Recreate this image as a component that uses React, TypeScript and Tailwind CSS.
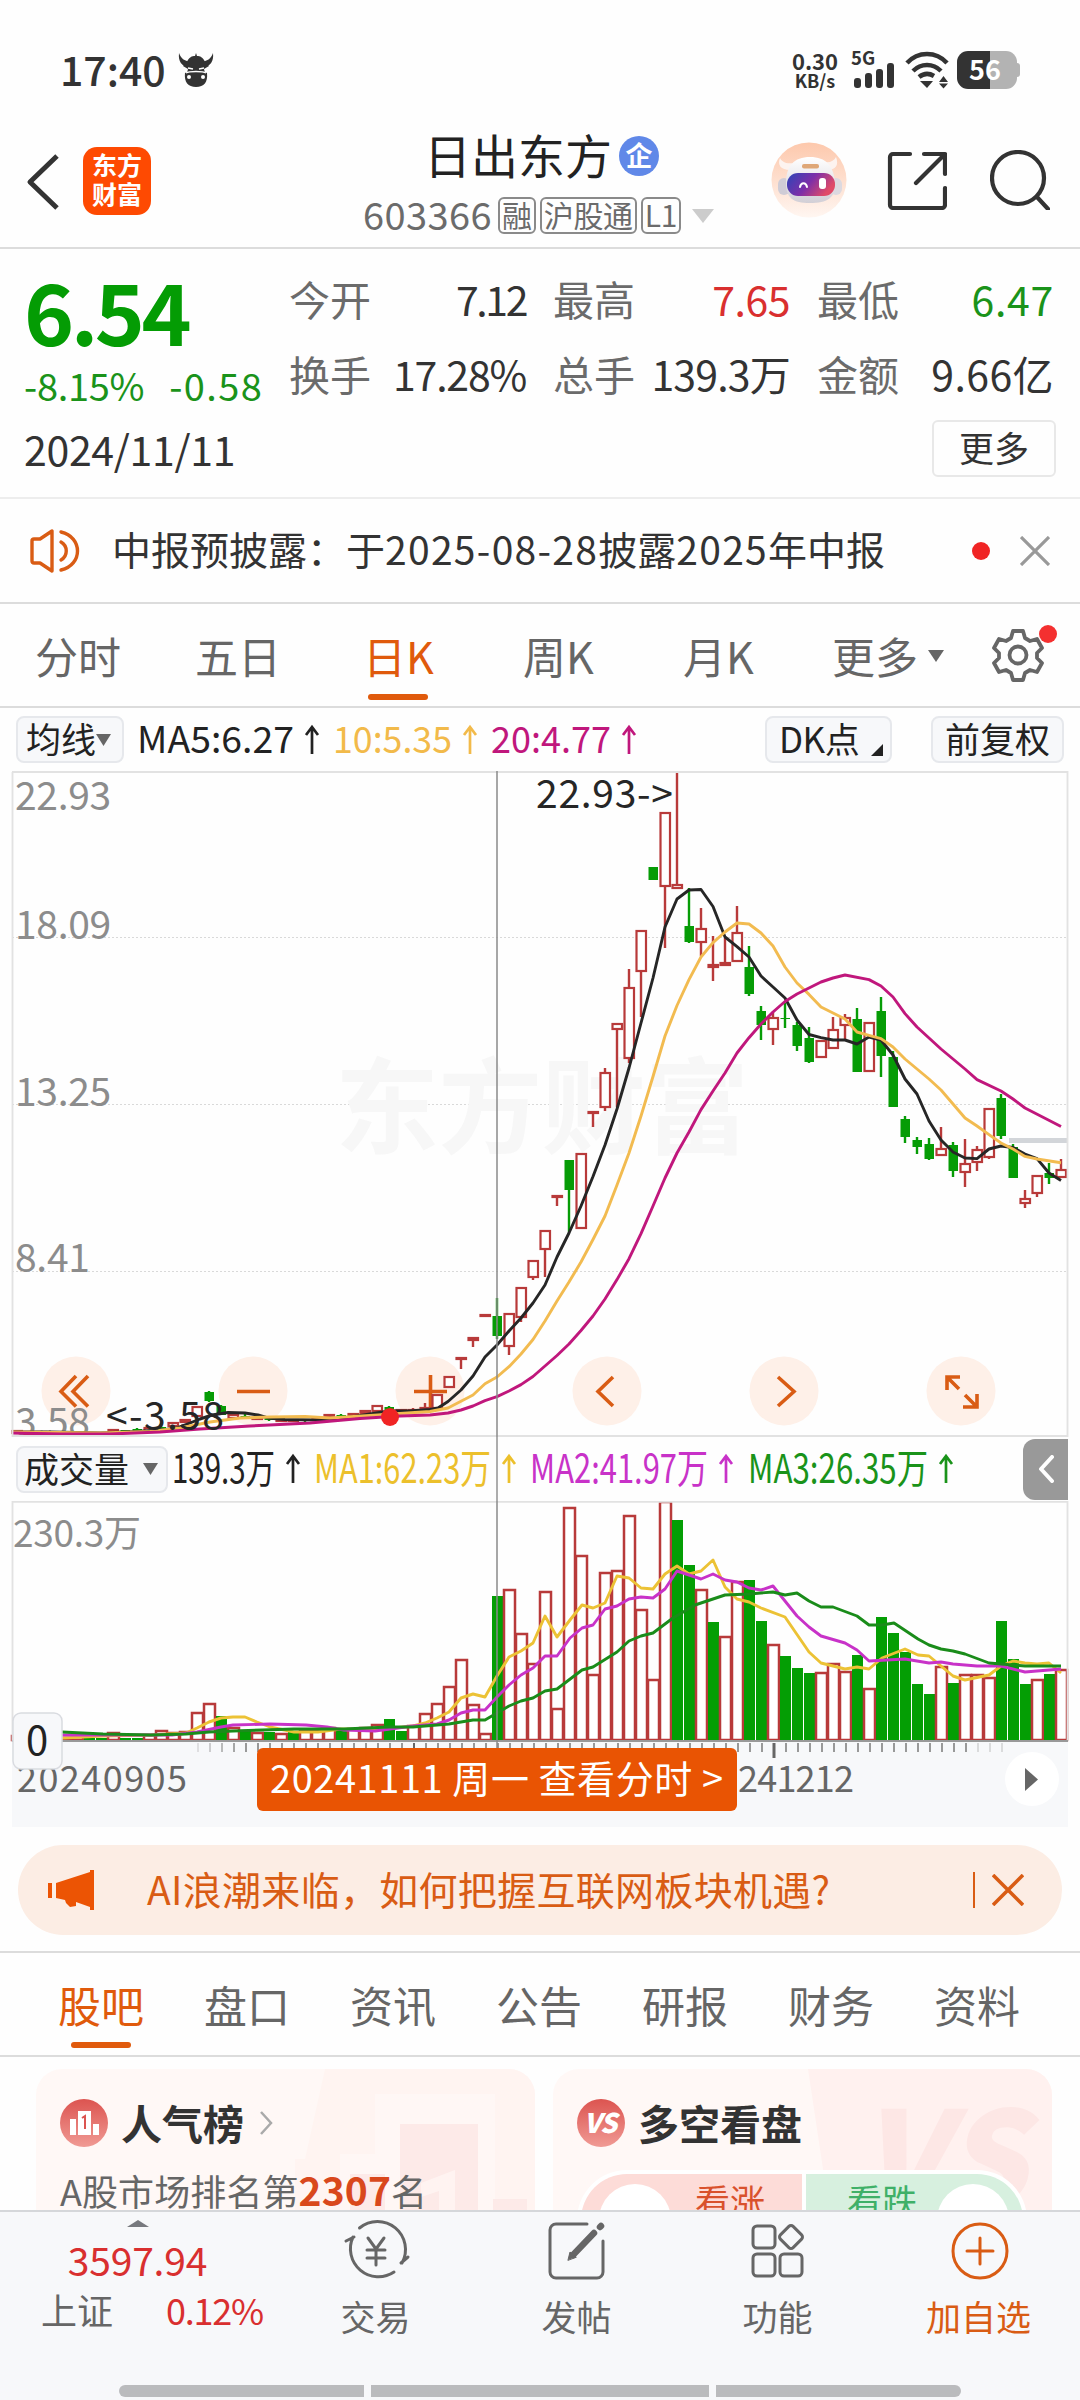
import type { ReactNode } from "react";
import clsx from "clsx";

type Candle = {
  i: number;
  up: boolean;
  high: number;
  top: number;
  bottom: number;
  low: number;
};

type Point = [number, number];

const STEP = 12;
const CROSSHAIR_X = 497;
const VOLUME_BASE = 1740;

// index (0 = crosshair day), direction, high, body top, body bottom, low
const CANDLE_ROWS: [number, "u" | "d", number, number, number, number][] = [
  [-40, "u", 1431, 1431, 1433, 1433],
  [-39, "u", 1432, 1432, 1434, 1434],
  [-38, "u", 1432, 1432, 1434, 1434],
  [-37, "d", 1433, 1433, 1435, 1435],
  [-36, "u", 1433, 1433, 1435, 1435],
  [-35, "u", 1434, 1434, 1436, 1436],
  [-34, "d", 1434, 1434, 1436, 1436],
  [-33, "d", 1435, 1436, 1437, 1438],
  [-32, "u", 1430, 1430, 1432, 1432],
  [-31, "d", 1430, 1430, 1431, 1432],
  [-30, "d", 1428, 1429, 1431, 1431],
  [-29, "u", 1428, 1428, 1431, 1431],
  [-28, "d", 1424, 1427, 1429, 1429],
  [-27, "u", 1423, 1423, 1426, 1426],
  [-26, "u", 1419, 1420, 1422, 1423],
  [-25, "u", 1406, 1407, 1416, 1417],
  [-24, "d", 1391, 1392, 1401, 1402],
  [-23, "d", 1405, 1406, 1415, 1415],
  [-22, "u", 1413, 1415, 1418, 1419],
  [-21, "d", 1414, 1416, 1418, 1418],
  [-20, "u", 1417, 1418, 1419, 1420],
  [-19, "d", 1418, 1419, 1420, 1421],
  [-18, "u", 1419, 1420, 1421, 1422],
  [-17, "u", 1419, 1420, 1421, 1422],
  [-16, "d", 1419, 1420, 1421, 1422],
  [-15, "u", 1418, 1419, 1420, 1420],
  [-14, "u", 1415, 1415, 1417, 1417],
  [-13, "d", 1414, 1415, 1417, 1417],
  [-12, "u", 1413, 1414, 1416, 1416],
  [-11, "u", 1410, 1411, 1413, 1414],
  [-10, "u", 1405, 1406, 1411, 1411],
  [-9, "d", 1406, 1407, 1410, 1411],
  [-8, "u", 1409, 1410, 1411, 1412],
  [-7, "u", 1408, 1410, 1411, 1411],
  [-6, "u", 1403, 1408, 1409, 1410],
  [-5, "u", 1395, 1395, 1408, 1408],
  [-4, "u", 1377, 1377, 1387, 1387],
  [-3, "u", 1358, 1358, 1359, 1369],
  [-2, "u", 1337, 1338, 1340, 1347],
  [-1, "u", 1315, 1315, 1316, 1316],
  [0, "d", 1298, 1316, 1336, 1339],
  [1, "u", 1313, 1314, 1346, 1355],
  [2, "u", 1288, 1288, 1317, 1322],
  [3, "u", 1261, 1261, 1277, 1280],
  [4, "u", 1230, 1231, 1249, 1277],
  [5, "u", 1196, 1196, 1197, 1206],
  [6, "d", 1160, 1160, 1190, 1232],
  [7, "u", 1154, 1154, 1228, 1228],
  [8, "u", 1112, 1112, 1113, 1127],
  [9, "u", 1068, 1073, 1107, 1111],
  [10, "u", 1023, 1024, 1029, 1107],
  [11, "u", 969, 988, 1058, 1063],
  [12, "u", 930, 931, 971, 1017],
  [13, "d", 867, 867, 880, 880],
  [14, "u", 812, 813, 886, 948],
  [15, "u", 771, 885, 888, 888],
  [16, "d", 888, 926, 942, 943],
  [17, "u", 908, 929, 942, 956],
  [18, "u", 936, 965, 967, 981],
  [19, "u", 938, 963, 965, 965],
  [20, "u", 906, 933, 961, 961],
  [21, "d", 946, 967, 994, 996],
  [22, "d", 1006, 1011, 1025, 1040],
  [23, "u", 1012, 1018, 1029, 1045],
  [24, "d", 1003, 1018, 1019, 1028],
  [25, "d", 1022, 1025, 1046, 1051],
  [26, "d", 1027, 1038, 1062, 1063],
  [27, "u", 1041, 1041, 1057, 1057],
  [28, "u", 1017, 1030, 1048, 1048],
  [29, "u", 1014, 1018, 1025, 1040],
  [30, "d", 1008, 1019, 1072, 1072],
  [31, "u", 1023, 1023, 1071, 1071],
  [32, "d", 997, 1011, 1056, 1077],
  [33, "d", 1051, 1057, 1107, 1107],
  [34, "d", 1116, 1119, 1137, 1143],
  [35, "d", 1137, 1140, 1147, 1154],
  [36, "d", 1138, 1144, 1159, 1160],
  [37, "u", 1127, 1149, 1155, 1155],
  [38, "d", 1142, 1145, 1171, 1177],
  [39, "u", 1139, 1164, 1172, 1187],
  [40, "u", 1146, 1150, 1162, 1171],
  [41, "u", 1109, 1109, 1157, 1159],
  [42, "d", 1094, 1098, 1136, 1139],
  [43, "d", 1144, 1147, 1178, 1178],
  [44, "u", 1190, 1199, 1203, 1208],
  [45, "u", 1175, 1176, 1193, 1197],
  [46, "d", 1163, 1173, 1178, 1184],
  [47, "u", 1159, 1170, 1177, 1177],
];

const CANDLES: Candle[] = CANDLE_ROWS.map(([i, dir, high, top, bottom, low]) => ({
  i,
  up: dir === "u",
  high,
  top,
  bottom,
  low,
}));

// bar tops from left to right, starting at index -40
const VOLUMES: [number, "u" | "d"][] = [
  [1736, "u"], [1737, "d"], [1738, "u"], [1738, "d"], [1738, "u"], [1737, "u"], [1738, "d"],
  [1738, "d"], [1733, "u"], [1738, "d"], [1738, "d"], [1735, "u"], [1731, "u"], [1733, "u"],
  [1732, "u"], [1713, "u"], [1704, "u"], [1716, "d"], [1728, "u"], [1730, "d"], [1733, "u"],
  [1732, "d"], [1734, "u"], [1731, "d"], [1730, "u"], [1730, "u"], [1728, "u"], [1730, "d"],
  [1729, "u"], [1728, "u"], [1725, "u"], [1719, "d"], [1731, "d"], [1726, "u"], [1714, "u"],
  [1704, "u"], [1687, "u"], [1660, "u"], [1705, "u"], [1734, "u"], [1596, "d"], [1590, "u"],
  [1634, "u"], [1664, "u"], [1592, "u"], [1709, "u"], [1508, "u"], [1556, "u"], [1675, "u"],
  [1573, "u"], [1571, "u"], [1516, "u"], [1610, "u"], [1680, "u"], [1502, "u"], [1520, "d"],
  [1565, "d"], [1590, "u"], [1622, "d"], [1637, "u"], [1582, "u"], [1580, "d"], [1621, "d"],
  [1645, "u"], [1656, "d"], [1668, "d"], [1673, "d"], [1673, "u"], [1664, "u"], [1672, "u"],
  [1655, "d"], [1689, "u"], [1617, "d"], [1633, "d"], [1652, "d"], [1684, "d"], [1694, "d"],
  [1667, "u"], [1683, "d"], [1675, "u"], [1675, "u"], [1678, "u"], [1621, "d"], [1659, "d"],
  [1684, "d"], [1680, "u"], [1674, "d"], [1670, "u"],
];

const MA5: Point[] = [
  [13, 1432], [50, 1432], [100, 1433], [137, 1431.5], [160, 1430], [175, 1428.5], [190, 1423],
  [200, 1419], [212, 1415], [228, 1412.5], [245, 1413], [258, 1415], [268, 1418], [285, 1419.5],
  [320, 1420], [345, 1418], [370, 1414], [389, 1411], [410, 1411], [430, 1409.5], [438, 1408],
  [448, 1401.5], [461, 1390], [473, 1376], [485, 1357], [497, 1345], [509, 1331], [521, 1318],
  [533, 1303], [545, 1285], [557, 1257], [569, 1233], [581, 1206], [593, 1176.5], [605, 1145],
  [617, 1109], [629, 1068], [641, 1023], [653, 978], [665, 927], [677, 899], [689, 890],
  [701, 889.5], [713, 906.5], [725, 937], [737, 946.6], [749, 957], [761, 976], [773, 987],
  [785, 998], [797, 1020], [809, 1034.5], [821, 1037.7], [833, 1040], [845, 1040], [857, 1044],
  [869, 1037], [881, 1040], [893, 1055], [905, 1079], [917, 1094], [929, 1121], [941, 1140],
  [953, 1152], [965, 1158], [977, 1158.6], [989, 1149], [1001, 1146], [1013, 1147.5],
  [1025, 1154], [1037, 1158.6], [1049, 1173], [1061, 1180.5],
];

const MA10: Point[] = [
  [13, 1432], [100, 1433], [150, 1431.5], [180, 1428], [210, 1422], [240, 1418], [270, 1417],
  [305, 1416.5], [330, 1418], [370, 1415.5], [400, 1413.5], [430, 1411.5], [448, 1408],
  [473, 1395], [485, 1383.7], [497, 1377], [509, 1366.7], [521, 1354], [533, 1339.5],
  [545, 1321], [557, 1301], [569, 1282], [581, 1262], [593, 1239.5], [605, 1216], [617, 1185],
  [629, 1153], [641, 1116], [653, 1076.5], [665, 1036], [677, 1005.5], [689, 979.6], [701, 957],
  [713, 942.6], [725, 932], [737, 923], [749, 924], [761, 933], [773, 946], [785, 967],
  [797, 983], [809, 994.4], [821, 1007], [833, 1013], [845, 1019], [857, 1032], [869, 1035.4],
  [881, 1038.6], [893, 1047], [905, 1059], [917, 1069], [929, 1079], [941, 1090], [953, 1104],
  [965, 1118], [977, 1126], [989, 1134.6], [1001, 1143], [1013, 1149], [1025, 1156.4],
  [1037, 1159], [1061, 1162.7],
];

const MA20: Point[] = [
  [13, 1433], [60, 1434], [110, 1434], [160, 1432], [200, 1429], [250, 1426], [310, 1423],
  [360, 1418.5], [400, 1416], [430, 1415], [448, 1413], [461, 1410], [473, 1406], [485, 1400.6],
  [497, 1396.6], [509, 1391], [521, 1384.6], [533, 1376.5], [545, 1366], [557, 1355.5],
  [569, 1344], [581, 1330.5], [593, 1316], [605, 1299], [617, 1279.6], [629, 1258.7],
  [641, 1233.7], [653, 1206], [665, 1178], [677, 1153], [689, 1132], [701, 1109.6], [713, 1091],
  [725, 1073], [737, 1053], [749, 1037.7], [761, 1024], [773, 1012], [785, 1001.5], [797, 994],
  [821, 982], [833, 978], [845, 975], [869, 979.6], [881, 986], [893, 997], [905, 1013.6],
  [917, 1027], [941, 1049], [965, 1069], [977, 1079.6], [1001, 1091], [1013, 1099],
  [1025, 1108], [1061, 1126.5],
];

const VOL_MA1: Point[] = [
  [13, 1738], [62, 1738], [103, 1736], [151, 1735], [186, 1733], [197, 1728], [209, 1722],
  [221, 1718], [233, 1717], [245, 1717], [257, 1722], [270, 1727], [294, 1732], [318, 1732],
  [341, 1729], [375, 1730], [413, 1726], [425, 1723], [437, 1718], [449, 1712], [461, 1698],
  [473, 1694], [485, 1697], [497, 1676], [509, 1657], [521, 1651], [533, 1643], [545, 1616],
  [557, 1637], [570, 1620], [582, 1605], [593, 1608], [605, 1603], [617, 1576], [629, 1578],
  [641, 1588], [653, 1589], [665, 1574], [677, 1566], [689, 1574], [701, 1571], [713, 1560],
  [725, 1587], [737, 1599], [749, 1602], [761, 1608], [785, 1617], [809, 1652], [821, 1663],
  [845, 1669], [857, 1667], [869, 1669], [882, 1658], [905, 1649], [918, 1655], [929, 1656],
  [953, 1676], [965, 1680], [989, 1675], [1001, 1666], [1013, 1661], [1025, 1663], [1037, 1664],
  [1049, 1663], [1061, 1673],
];

const VOL_MA2: Point[] = [
  [13, 1735], [62, 1735], [103, 1735], [172, 1735], [197, 1732], [221, 1727], [233, 1725],
  [270, 1724], [306, 1725], [327, 1727], [344, 1730], [375, 1731], [413, 1726], [437, 1724],
  [449, 1720], [461, 1713], [473, 1710], [485, 1710], [497, 1697], [509, 1685], [521, 1675],
  [533, 1668], [545, 1656], [557, 1656], [570, 1638], [582, 1628], [593, 1625], [605, 1609],
  [617, 1606], [629, 1599], [641, 1597], [653, 1598], [665, 1589], [677, 1571], [701, 1579],
  [713, 1574], [725, 1580], [737, 1582], [749, 1588], [761, 1590], [773, 1586], [797, 1616],
  [809, 1627], [821, 1636], [845, 1643], [857, 1650], [869, 1661], [905, 1659], [929, 1663],
  [941, 1662], [953, 1664], [977, 1666], [1001, 1666], [1025, 1672], [1037, 1671], [1061, 1669],
];

const VOL_MA3: Point[] = [
  [13, 1731], [62, 1732], [103, 1734], [151, 1735], [186, 1734], [209, 1732], [233, 1731],
  [294, 1729], [344, 1729], [389, 1727], [413, 1727], [449, 1724], [461, 1722], [473, 1720],
  [485, 1720], [497, 1713], [509, 1706], [521, 1701], [533, 1698], [545, 1691], [557, 1689],
  [582, 1670], [593, 1667], [617, 1652], [629, 1641], [641, 1636], [653, 1633], [673, 1618],
  [685, 1611], [695, 1605], [725, 1595], [749, 1594], [773, 1592], [785, 1595], [797, 1593],
  [809, 1601], [821, 1607], [833, 1607], [857, 1616], [869, 1625], [882, 1625], [894, 1623],
  [918, 1639], [929, 1645], [941, 1649], [953, 1651], [965, 1654], [989, 1663], [1001, 1664],
  [1025, 1666], [1061, 1666],
];

const barX = (i: number) => CROSSHAIR_X + i * STEP;

function MaLine({ points, color }: { points: Point[]; color: string }) {
  return (
    <polyline
      points={points.map((p) => p.join(",")).join(" ")}
      fill="none"
      stroke={color}
      strokeWidth={2.9}
      strokeLinejoin="round"
    />
  );
}

function StatusBar() {
  return (
    <div className="flex h-[142px] items-center px-[60px] pb-[3px] text-[#333]">
      <span className="-mt-[2px] w-[104px] whitespace-nowrap text-[41px] font-medium leading-none">17:40</span>
      <svg className="ml-[14px] h-[36px] w-[36px]" viewBox="0 0 36 36" fill="#333">
        <path d="M1 1c-1 9 3 13 9 14l3-5C7 9 3 7 1 1zM35 1c1 9-3 13-9 14l-3-5c6-1 10-3 12-9z" />
        <path d="M9 10c2-5 5-6 8-6l1-3 1 3c3 0 6 1 8 6l4 4-5 3 1 4H9l1-4-5-3z" />
        <path d="M7 21c5-3 17-3 22 0 1 9-3 14-11 14S6 30 7 21z" />
        <path d="M10 16l5 1M26 16l-5 1M8 21c3-2 17-2 20 0" stroke="#fff" strokeWidth="1.5" />
        <circle cx="11" cy="25" r="2" fill="#fff" />
        <circle cx="25" cy="25" r="2" fill="#fff" />
      </svg>
      <div className="ml-auto flex flex-col items-center text-[22px] font-bold leading-[20px]">
        <span>0.30</span>
        <span className="text-[18px]">KB/s</span>
      </div>
      <svg className="ml-[14px] h-[38px] w-[44px] overflow-visible" viewBox="0 0 44 38">
        <text x="-1" y="14" fontSize="18.500" fontWeight="700" fill="#333">5G</text>
        <g fill="#333">
          <rect x="2" y="27" width="7" height="10" rx="3" />
          <rect x="13" y="22" width="7" height="15" rx="3" />
          <rect x="24" y="18" width="7" height="19" rx="3" />
          <rect x="35" y="12" width="7" height="25" rx="3" />
        </g>
      </svg>
      <svg className="ml-[9px] h-[38px] w-[44px]" viewBox="0 0 44 38" fill="none" stroke="#333" strokeWidth="4.5">
        <path d="M2 12c11-12 29-12 40 0M8 20c8-8 20-8 28 0" />
        <path d="M14 26c5-4 10-4 15-1" />
        <path d="M15 30h13l-6 7z" fill="#333" stroke="none" />
        <path d="M34 31l4.5-6 4.500 6zM34 32.500l4.500 5 4.500-5z" fill="#333" stroke="none" />
      </svg>
      <div className="ml-2 flex h-[38px] w-[60px] items-center justify-center rounded-[11px] bg-[linear-gradient(90deg,#333_55%,#b3b3b3_55%)]">
        <span className="-mt-[2px] mr-1 text-[27px] font-bold leading-none text-white">56</span>
      </div>
      <span className="h-[14px] w-[3px] rounded-r bg-[#b3b3b3]" />
    </div>
  );
}

function RobotAvatar() {
  return (
    <svg className="h-[76px] w-[76px]" viewBox="0 0 76 76">
      <defs>
        <linearGradient id="halo" x1="0" y1="0" x2="0" y2="1">
          <stop offset="0" stopColor="#fdc8ac" />
          <stop offset="1" stopColor="#fff6f1" />
        </linearGradient>
        <linearGradient id="visor" x1="0" y1="0" x2="1" y2="0.4">
          <stop offset="0" stopColor="#2b45b8" />
          <stop offset="0.55" stopColor="#7d2fa8" />
          <stop offset="1" stopColor="#e04a68" />
        </linearGradient>
        <linearGradient id="shell" x1="0" y1="0" x2="0" y2="1">
          <stop offset="0" stopColor="#fff" />
          <stop offset="1" stopColor="#d2cfd6" />
        </linearGradient>
      </defs>
      <circle cx="38" cy="38" r="37.500" fill="url(#halo)" />
      <path d="M19 28c-9 0-13-5-10-12 2 4 6 6 13 5zM56 28c9 0 12-5 9-13-2 4-6 6-12 5z" fill="#fdf3ef" />
      <rect x="7" y="36" width="12" height="17" rx="6" fill="#cfccd6" />
      <rect x="59" y="36" width="12" height="17" rx="6" fill="#dcd9e0" />
      <path d="M15 41c0-17 8-26 24-26s24 9 25 26c1 15-8 20-25 20S15 56 15 41z" fill="url(#shell)" />
      <rect x="16" y="31" width="48" height="23" rx="11" fill="url(#visor)" />
      <rect x="31" y="22" width="17" height="4.500" rx="2" fill="#dfa777" />
      <path d="M29 45c1-5 6-5 7 0" stroke="#fff" strokeWidth="2" fill="none" strokeLinecap="round" />
      <rect x="48" y="36" width="7" height="11" rx="3" fill="#fff" />
    </svg>
  );
}

function Tag({ children }: { children: ReactNode }) {
  return (
    <span className="flex h-[37px] shrink-0 items-center whitespace-nowrap rounded-[6px] border-2 border-[#8a8a8a] px-[2px] pb-1 text-[30px] leading-none tracking-[-0.3px] text-[#6b6b6b]">
      {children}
    </span>
  );
}

function Header() {
  return (
    <header className="flex h-[107px] items-start border-b-2 border-[#dcdcdc] pl-[26px] pr-[30px]">
      <svg className="mt-[12px] h-[56px] w-[34px]" viewBox="0 0 34 56" fill="none" stroke="#333" strokeWidth="5" strokeLinejoin="round">
        <path d="M31 2L4 28l27 26" />
      </svg>
      <div className="ml-[23px] mt-[5px] flex h-[68px] w-[68px] flex-col items-center justify-center rounded-[14px] bg-[#fe4a02] pb-1 text-[25px] font-bold leading-[29px] text-white">
        <span>东方</span>
        <span>财富</span>
      </div>
      <div className="ml-[212px] flex w-[350px] flex-col">
        <div className="-mt-[13px] flex items-center pl-[61px]">
          <span className="text-[47px] leading-[50px] text-[#222]">日出东方</span>
          <span className="ml-[7px] mt-1 flex h-[40px] w-[40px] items-center justify-center rounded-full bg-[#6088e8] pb-1 text-[27px] font-bold leading-none text-white">
            企
          </span>
        </div>
        <div className="mt-[18px] flex items-center gap-[4px]">
          <span className="-mt-1 w-[131px] shrink-0 text-[38px] leading-none tracking-[0.4px] text-[#6b6b6b]">603366</span>
          <Tag>融</Tag>
          <Tag>沪股通</Tag>
          <Tag>L1</Tag>
          <svg className="ml-[7px] h-[14px] w-[22px] shrink-0" viewBox="0 0 22 14">
            <path d="M0 0h22L11 14z" fill="#ccc" />
          </svg>
        </div>
      </div>
      <div className="ml-auto flex items-center">
        <RobotAvatar />
        <svg className="ml-[40px] h-[60px] w-[60px]" viewBox="0 0 60 60" fill="none" stroke="#333" strokeWidth="4.200" strokeLinecap="round" strokeLinejoin="round">
          <path d="M23 4H6a3 3 0 0 0-3 3v48a3 3 0 0 0 3 3h49a3 3 0 0 0 3-3V38M37 4h21v20M57 5L29 33" />
        </svg>
        <svg className="ml-[43px] h-[60px] w-[60px]" viewBox="0 0 60 60" fill="none" stroke="#333" strokeWidth="4.200" strokeLinecap="round">
          <circle cx="28" cy="28" r="26" />
          <path d="M47 47l11 12" />
        </svg>
      </div>
    </header>
  );
}

const STATS = [
  ["今开", "7.12", "text-[#333] tracking-[-2.4px]"],
  ["最高", "7.65", "text-[#d92f2f] tracking-[-0.5px]"],
  ["最低", "6.47", "text-[#1a931a] tracking-[0.7px]"],
  ["换手", "17.28%", "text-[#333] tracking-[-1.2px]"],
  ["总手", "139.3万", "text-[#333] tracking-[-0.8px]"],
  ["金额", "9.66亿", "text-[#333] tracking-[0.4px]"],
];

function Quote() {
  return (
    <section className="flex h-[250px] border-b-2 border-[#ededed] pl-6 pr-[24px]">
      <div className="flex w-[265px] shrink-0 flex-col whitespace-nowrap">
        <span className="mt-[15px] text-[85px] font-bold leading-[90px] tracking-[-3.500px] text-[#049c04]">
          6.54
        </span>
        <span className="mt-[9px] flex gap-[25px] text-[38px] leading-[44px] text-[#1a931a]">
          <span className="tracking-[-0.3px]">-8.15%</span>
          <span className="tracking-[1.4px]">-0.58</span>
        </span>
        <span className="mt-[19px] text-[41px] leading-[44px] tracking-[-0.3px] text-[#333]">2024/11/11</span>
      </div>
      <div className="flex flex-1 flex-col">
        <div className="grid grid-cols-[237px_237px_237px] gap-x-[27px] pt-[24px]">
          {STATS.map(([label, value, tone]) => (
            <div key={label} className="flex h-[75px] items-start justify-between whitespace-nowrap text-[41px] leading-[50px]">
              <span className="text-[#6b6b6b]">{label}</span>
              <span className={tone}>{value}</span>
            </div>
          ))}
        </div>
        <div className="-mt-[3px] ml-auto flex h-[57px] w-[124px] items-center justify-center rounded-md border-2 border-[#e8e8e8] pb-1 text-[35px] leading-none text-[#333]">
          更多
        </div>
      </div>
    </section>
  );
}

function Notice() {
  return (
    <section className="flex h-[105px] items-center border-b-2 border-[#dcdcdc] pl-[29px] pr-[30px]">
      <svg className="h-[44px] w-[52px]" viewBox="0 0 52 44" fill="none" stroke="#d95c14" strokeWidth="3.400" strokeLinejoin="round" strokeLinecap="round">
        <path d="M3 12q0-2 2-2h6L23 2v40L11 34H5q-2 0-2-2z" />
        <path d="M32 13c7 4 7 14 0 18M32 3c22 5 22 33 0 38" />
      </svg>
      <span className="-mt-1 ml-[31px] whitespace-nowrap text-[39px] leading-none text-[#333]">
        中报预披露：于<span className="tracking-[1.3px]">2025-08-28</span>披露
        <span className="tracking-[1.3px]">2025</span>年中报
      </span>
      <span className="ml-auto mr-[30px] h-[18px] w-[18px] rounded-full bg-[#f02424]" />
      <svg className="h-[30px] w-[30px]" viewBox="0 0 30 30" stroke="#999" strokeWidth="3.200">
        <path d="M1 1l28 28M29 1L1 29" />
      </svg>
    </section>
  );
}

const PERIODS = [
  ["分时", "w-[160px]"],
  ["五日", "w-[168px]"],
  ["日K", "w-[160px]"],
  ["周K", "w-[160px]"],
  ["月K", "w-[149px]"],
];

function PeriodTabs() {
  return (
    <nav className="flex h-[104px] items-center border-b-2 border-[#dcdcdc] pl-[35px] text-[43px] leading-none text-[#666]">
      {PERIODS.map(([label, width]) => {
        const active = label === "日K";
        return (
          <div key={label} className={clsx("flex h-full flex-col", width)}>
            <span className={clsx("mt-[30px]", active && "text-[#e05a0c]")}>{label}</span>
            {active ? <span className="ml-[5px] mt-[17px] h-[6px] w-[60px] rounded-full bg-[#e05a0c]" /> : null}
          </div>
        );
      })}
      <div className="flex h-full items-start">
        <span className="mt-[30px]">更多</span>
        <svg className="ml-[10px] mt-[46px] h-[12px] w-[16px]" viewBox="0 0 16 12">
          <path d="M0 0h16L8 12z" fill="#666" />
        </svg>
      </div>
      <div className="relative ml-[47px] mt-[2px] h-[56px] w-[56px]">
        <svg className="h-[54px] w-[54px]" viewBox="0 0 54 54" fill="none" stroke="#666" strokeWidth="3.800" strokeLinejoin="round">
          <path d="M22 3h10l2 7 5 3 7-2 5 9-5 5v5l5 5-5 9-7-2-5 3-2 7H22l-2-7-5-3-7 2-5-9 5-5v-5l-5-5 5-9 7 2 5-3z" />
          <circle cx="27" cy="27" r="8.500" />
        </svg>
        <span className="absolute -right-[10px] -top-[3px] h-[18px] w-[18px] rounded-full bg-[#f43030]" />
      </div>
    </nav>
  );
}

function Chip({ className, children }: { className: string; children: ReactNode }) {
  return (
    <div className={clsx("flex h-[47px] shrink-0 items-center whitespace-nowrap rounded-lg border-2 border-[#e6e8ec] bg-[#f7f8fa] pb-1 text-[35px] leading-none text-[#222]", className)}>
      {children}
    </div>
  );
}

function Caret() {
  return (
    <svg className="mt-1 h-[12px] w-[15px]" viewBox="0 0 15 12">
      <path d="M0 0h15L7.500 12z" fill="#666" />
    </svg>
  );
}

// condensed reading followed by its trend arrow
function Indicator({ text, width, size, className }: { text: string; width: number; size: number; className: string }) {
  return (
    <svg className={clsx("h-[44px] shrink-0 overflow-visible", className)} width={width + 26} height="44">
      <text
        x="0"
        y={22 + size * 0.36}
        fontSize={size}
        fill="currentColor"
        textLength={width}
        lengthAdjust="spacingAndGlyphs"
      >
        {text}
      </text>
      <path
        d={`M${width + 18} 36V9M${width + 12} 17l6-8 6 8`}
        fill="none"
        stroke="currentColor"
        strokeWidth="2.700"
      />
    </svg>
  );
}

function PriceHeader() {
  return (
    <div className="flex h-[63px] items-center pl-[16px] pr-[16px] text-[35px]">
      <Chip className="w-[108px] pl-[8px]">
        均线
        <Caret />
      </Chip>
      <Indicator text="MA5:6.27" width={157} size={37} className="ml-[13px] text-[#222]" />
      <Indicator text="10:5.35" width={119} size={37} className="ml-[13px] text-[#f2ba4a]" />
      <Indicator text="20:4.77" width={120} size={37} className="ml-[13px] text-[#c0177c]" />
      <Chip className="ml-auto w-[127px] pl-3">
        <span className="tracking-[-0.500px]">DK点</span>
        <svg className="ml-[12px] mt-[24px] h-[12px] w-[12px]" viewBox="0 0 12 12">
          <path d="M12 0v12H0z" fill="#222" />
        </svg>
      </Chip>
      <Chip className="ml-[39px] w-[133px] justify-center">前复权</Chip>
    </div>
  );
}

function PriceChart() {
  return (
    <svg className="block h-full w-full" viewBox="0 771 1080 666">
      <g stroke="#d9d9d9" strokeWidth="1.200" strokeDasharray="2 2">
        <path d="M12 937.500H1068M12 1104.500H1068M12 1271.500H1068" />
      </g>
      <text x="335" y="1146" fontSize="104" fontWeight="700" fill="#f7f7f7" textLength="414">
        东方财富
      </text>
      <rect x="1009" y="1138" width="59" height="5" fill="#d2d5d9" />
      <g fill="#8c8c8c" fontSize="39" letterSpacing="-0.300">
        <text x="15" y="810">22.93</text>
        <text x="15" y="939">18.09</text>
        <text x="15" y="1106">13.25</text>
        <text x="15" y="1272">8.41</text>
      </g>
      <g fill="#fef0e8">
        {[76, 253, 430, 607, 784, 961].map((cx) => (
          <circle key={cx} cx={cx} cy={1391} r={34.500} />
        ))}
      </g>
      <g fill="none" stroke="#d95c14" strokeWidth="3.600">
        <path d="M76 1376l-15 15.500 15 15M88 1376l-15 15.500 15 15" />
        <path d="M237 1391.500h33M414 1391.500h33M430.500 1375v33" />
        <path d="M613 1377l-15 14.500 15 14.500M778 1377l16 14.500-16 14.500" />
        <path d="M959 1389l-12-12M947 1390v-13h13M965 1395l12 12M977 1394v13h-14" />
      </g>
      <text x="15" y="1436" fill="#8c8c8c" fontSize="39" letterSpacing="-0.300">3.58</text>
      <g>
        {CANDLES.map(({ i, up, high, top, bottom, low }) => {
          const x = barX(i);
          const color = up ? "#b83a3a" : "#069c06";
          const thin = bottom - top < 3;
          return (
            <g key={i}>
              <path d={`M${x} ${high}V${top}M${x} ${bottom}V${low}`} stroke={color} strokeWidth="2.400" />
              {up ? (
                <rect
                  x={x - 4.5}
                  y={top}
                  width={9.5}
                  height={Math.max(bottom - top, 0.5)}
                  fill={thin ? color : "#fff"}
                  stroke={color}
                  strokeWidth="2.200"
                />
              ) : (
                <rect x={x - 4.5} y={top} width={9.5} height={bottom - top} fill={color} />
              )}
            </g>
          );
        })}
      </g>
      <MaLine points={MA5} color="#262626" />
      <MaLine points={MA10} color="#f2bb50" />
      <MaLine points={MA20} color="#c0177c" />
      <circle cx="390" cy="1417" r="9" fill="#f02424" />
      <g fill="#262626" fontSize="39">
        <text x="536" y="808" textLength="137">22.93-&gt;</text>
        <text x="106" y="1430" textLength="118">&lt;-3.58</text>
      </g>
      <path d="M12 772H1067.500V1436H12.500V772" fill="none" stroke="#e2e2e2" strokeWidth="1.800" />
      <path d="M497 771V1437" stroke="#8a8a8a" strokeWidth="1.500" />
    </svg>
  );
}

function VolumeHeader() {
  return (
    <div className="relative flex h-[64px] items-center pl-[16px] text-[34px]">
      <Chip className="w-[152px] justify-between pl-[6px] pr-[8px]">
        成交量
        <Caret />
      </Chip>
      <Indicator text="139.3万" width={103} size={40} className="ml-[4px] text-[#222]" />
      <Indicator text="MA1:62.23万" width={177} size={40} className="ml-[13px] text-[#ecc02c]" />
      <Indicator text="MA2:41.97万" width={178} size={40} className="ml-[13px] text-[#c832c8]" />
      <Indicator text="MA3:26.35万" width={180} size={40} className="ml-[14px] text-[#1a931a]" />
      <div className="ml-auto mr-[12px] flex h-[61px] w-[45px] items-center justify-center rounded-l-xl bg-[#999]">
        <svg className="h-[28px] w-[16px]" viewBox="0 0 16 28" fill="none" stroke="#fff" strokeWidth="4" strokeLinecap="round" strokeLinejoin="round">
          <path d="M14 2L3 14l11 12" />
        </svg>
      </div>
      <span className="absolute left-[496px] top-0 h-full w-[2px] bg-[#8a8a8a]/70" />
    </div>
  );
}

function VolumeChart() {
  return (
    <svg className="block h-full w-full" viewBox="0 1501 1080 326">
      <rect x="12" y="1742" width="1056" height="85" fill="#f7f8fa" />
      <text x="13" y="1547" fill="#8c8c8c" fontSize="37" letterSpacing="-0.300">230.3万</text>
      {VOLUMES.map(([top, dir], n) => {
        const x = barX(n - 40);
        return dir === "u" ? (
          <rect key={n} x={x - 5} y={top} width={11} height={VOLUME_BASE - top} fill="#fff" stroke="#b83a3a" strokeWidth="2.500" />
        ) : (
          <rect key={n} x={x - 5} y={top} width={11} height={VOLUME_BASE - top} fill="#049e04" />
        );
      })}
      <MaLine points={VOL_MA1} color="#ecc235" />
      <MaLine points={VOL_MA2} color="#c832c8" />
      <MaLine points={VOL_MA3} color="#1a8c1a" />
      <path d="M12 1501.800H1067.500V1741M12.500 1741V1501" fill="none" stroke="#e2e2e2" strokeWidth="1.800" />
      <path d="M12 1741H1068" stroke="#999" strokeWidth="2" />
      {Array.from({ length: 68 }, (_, n) => (
        <path
          key={n}
          d={`M${198 + n * 12} 1743v${n === 48 ? 15 : 9}`}
          stroke={n === 48 || n === 18 ? "#666" : "#999"}
          strokeWidth={n === 48 ? 3 : 2}
          opacity={n < 4 ? 0.25 + n * 0.2 : n > 64 ? 0.3 : 1}
        />
      ))}
      <path d="M497 1501V1752" stroke="#8a8a8a" strokeWidth="1.500" />
      <g fill="#666" fontSize="36">
        <text x="17" y="1792" textLength="170">20240905</text>
        <text x="738" y="1792" textLength="116">241212</text>
      </g>
      <rect x="13" y="1713" width="49" height="56" rx="8" fill="#f7f8fa" stroke="#d9dbe0" strokeWidth="1.500" />
      <text x="26" y="1755" fontSize="40" fill="#222">0</text>
      <rect x="257" y="1748" width="480" height="63" rx="6" fill="#e95403" />
      <text x="270" y="1793" fontSize="38" fill="#fff" textLength="453" lengthAdjust="spacing">
        20241111 周一 查看分时 &gt;
      </text>
      <circle cx="1032" cy="1779" r="27" fill="#fff" />
      <path d="M1025 1768v23l13-11.500z" fill="#666" />
    </svg>
  );
}

function Banner() {
  return (
    <div className="mx-[18px] mt-[18px] flex h-[90px] items-center rounded-full bg-[#fcede4] pl-[30px] pr-[38px]">
      <svg className="h-[40px] w-[46px]" viewBox="0 0 46 40" fill="#ec5404">
        <path d="M0 13h4v15H0zM8 13L42 2V0h4v40h-4v-3l-14-5v4l-6 1-4-4-1-3-9-2z" />
      </svg>
      <span className="-mt-1 ml-[53px] whitespace-nowrap text-[39px] leading-none tracking-[0.3px] text-[#d95c14]">
        AI浪潮来临，如何把握互联网板块机遇?
      </span>
      <span className="ml-auto mr-[17px] h-[36px] w-[2px] bg-[#d95c14]" />
      <svg className="h-[32px] w-[32px]" viewBox="0 0 32 32" stroke="#d95c14" strokeWidth="3.600">
        <path d="M1 1l30 30M31 1L1 31" />
      </svg>
    </div>
  );
}

const SECTIONS = ["股吧", "盘口", "资讯", "公告", "研报", "财务", "资料"];

function SectionTabs() {
  return (
    <nav className="mt-4 flex h-[106px] border-y-2 border-[#dcdcdc] pl-[58px] text-[43px] leading-none text-[#666]">
      {SECTIONS.map((label, n) => (
        <div key={label} className="flex w-[146.300px] flex-col">
          <span className={clsx("mt-[30px]", n === 0 && "text-[#e05a0c]")}>{label}</span>
          {n === 0 ? <span className="ml-[13px] mt-[16px] h-[6px] w-[60px] rounded-full bg-[#e05a0c]" /> : null}
        </div>
      ))}
    </nav>
  );
}

function PopularityCard() {
  return (
    <div className="relative h-[200px] w-[499px] overflow-hidden rounded-[26px] bg-[#fff8f6] px-[24px] pt-[30px]">
      <svg className="absolute right-0 top-0 h-[200px] w-[260px]" viewBox="0 0 260 200">
        <path d="M50 0h210v200H20V90h10z" fill="#fff4f1" />
        <path d="M65 85h35V25h120v175H65z" fill="#fff7f5" />
        <path d="M125 55h78v145h-78zM75 105h35v95H75zM218 130h34v70h-34z" fill="#fdeae8" />
        <path d="M146 114l34-13v99h-16v-78l-18 6z" fill="#fff3f1" />
      </svg>
      <div className="relative flex items-center">
        <svg className="h-[48px] w-[48px]" viewBox="0 0 48 48">
          <defs>
            <linearGradient id="badge" x1="0" y1="0" x2="0" y2="1">
              <stop offset="0" stopColor="#dc5450" />
              <stop offset="1" stopColor="#f09a94" />
            </linearGradient>
          </defs>
          <circle cx="24" cy="24" r="24" fill="url(#badge)" />
          <path d="M10 20h6v16h-6zM18 12h13v24H18zM33 25h6v11h-6z" fill="#fff" />
          <path d="M22 19l3-2v13" stroke="#dc5450" strokeWidth="2" fill="none" />
        </svg>
        <span className="-mt-[2px] ml-[13px] text-[41px] font-bold leading-none text-[#333]">人气榜</span>
        <svg className="ml-[15px] h-[24px] w-[14px]" viewBox="0 0 14 24" fill="none" stroke="#aaa" strokeWidth="2.500">
          <path d="M2 1l10 11L2 23" />
        </svg>
      </div>
      <div className="relative mt-[21px] whitespace-nowrap text-[36px] leading-[44px] tracking-[0.100px] text-[#666]">
        A股市场排名第<b className="text-[39px] leading-none text-[#d9481c]">2307</b>名
      </div>
    </div>
  );
}

function SentimentCard() {
  return (
    <div className="relative h-[200px] w-[499px] overflow-hidden rounded-[26px] bg-[#fff8f6] pl-[24px] pt-[30px]">
      <svg className="absolute right-0 top-0 h-[200px] w-[244px]" viewBox="0 0 244 200">
        <path d="M0 0h244v200H30z" fill="#fff1ef" />
        <text x="50" y="138" fontSize="132" fontWeight="900" fontStyle="italic" fill="#fde7e5">VS</text>
      </svg>
      <div className="relative flex items-center">
        <svg className="h-[48px] w-[48px]" viewBox="0 0 48 48">
          <circle cx="24" cy="24" r="24" fill="url(#badge)" />
          <text x="23" y="34" textAnchor="middle" fontSize="27" fontWeight="900" fontStyle="italic" fill="#fff" letterSpacing="-1">VS</text>
        </svg>
        <span className="-mt-[2px] ml-[13px] text-[41px] font-bold leading-none text-[#333]">多空看盘</span>
      </div>
      <div className="relative mt-[23px] flex h-[86px] w-[450px] gap-1 overflow-hidden rounded-t-[50px] border-4 border-b-0 border-white bg-white text-[35px] leading-none">
        <div className="flex flex-1 items-start bg-[#fddcd8] pl-[18px] pt-[10px] text-[#d9512c]">
          <span className="h-[72px] w-[72px] rounded-full bg-white" />
          <span className="-mt-[2px] ml-[24px]">看涨</span>
        </div>
        <div className="flex flex-1 items-start justify-end bg-[#d7f0df] pr-[14px] pt-[10px] text-[#3fb068]">
          <span className="-mt-[2px] mr-[20px]">看跌</span>
          <span className="h-[72px] w-[72px] rounded-full bg-white" />
        </div>
      </div>
    </div>
  );
}

function NavItem({ label, active, children }: { label: string; active?: boolean; children: ReactNode }) {
  return (
    <div className={clsx("flex w-[201px] flex-col items-center pt-[9px]", active ? "text-[#d95c14]" : "text-[#666]")}>
      <svg className="h-[60px] w-[66px] overflow-visible" viewBox="0 0 66 60" fill="none" stroke="currentColor" strokeWidth="3" strokeLinejoin="round" strokeLinecap="round">
        {children}
      </svg>
      <span className="mt-[15px] text-[35px] leading-[40px]">{label}</span>
    </div>
  );
}

function BottomNav() {
  return (
    <footer className="relative flex h-[190px] border-t-2 border-[#d5d7da] bg-[#f7f8fa]">
      <div className="flex w-[275px] shrink-0 flex-col items-center whitespace-nowrap">
        <svg className="mt-[8px] h-[7px] w-[22px]" viewBox="0 0 22 7">
          <path d="M11 0l11 7H0z" fill="#77797e" />
        </svg>
        <span className="mt-[10px] text-[39px] leading-[44px] tracking-[-0.2px] text-[#d92f2f]">3597.94</span>
        <div className="ml-[29px] mt-[6px] flex w-[222px] justify-between text-[36px] leading-[44px]">
          <span className="text-[#666]">上证</span>
          <span className="tracking-[-1.200px] text-[#d92f2f]">0.12%</span>
        </div>
      </div>
      <NavItem label="交易">
        <path d="M16.500 7A28 28 0 0 1 59 42M58 42l7-6M51 51A28 28 0 0 1 10 16M11 16l-8 4" />
        <path d="M25 17l8 11 8-11M33 28v16M24 29h18M24 37h18" />
      </NavItem>
      <NavItem label="发帖">
        <path d="M43 3H12a6 6 0 0 0-6 6v42a6 6 0 0 0 6 6h41a6 6 0 0 0 6-6V20" />
        <path d="M29 34l21-22M56 6l1-1" strokeWidth="6.500" />
        <path d="M24 39l2-8 6 5z" fill="currentColor" strokeWidth="1" />
      </NavItem>
      <NavItem label="功能">
        <rect x="8" y="5" width="22" height="22" rx="4" />
        <rect x="8" y="33" width="22" height="22" rx="4" />
        <rect x="35" y="33" width="22" height="22" rx="4" />
        <rect x="37" y="7" width="18" height="18" rx="3" transform="rotate(45 46 16)" />
      </NavItem>
      <NavItem label="加自选" active>
        <circle cx="34" cy="30" r="27" />
        <path d="M34 17v26M21 30h26" />
      </NavItem>
      <div className="absolute bottom-[3px] left-[119px] flex gap-[7px]">
        <span className="h-[12px] w-[245px] rounded-l-full bg-[#babbbd]" />
        <span className="h-[12px] w-[338px] bg-[#babbbd]" />
        <span className="h-[12px] w-[245px] rounded-r-full bg-[#babbbd]" />
      </div>
    </footer>
  );
}

export default function App() {
  return (
    <div className="flex h-[2400px] w-[1080px] flex-col overflow-hidden bg-[#fefefe] font-['Noto_Sans_CJK_SC',sans-serif]">
      <StatusBar />
      <Header />
      <Quote />
      <Notice />
      <PeriodTabs />
      <PriceHeader />
      <div className="h-[666px] shrink-0">
        <PriceChart />
      </div>
      <VolumeHeader />
      <div className="h-[326px] shrink-0">
        <VolumeChart />
      </div>
      <Banner />
      <SectionTabs />
      <div className="flex h-[153px] shrink-0 gap-[18px] overflow-hidden pl-[36px] pt-[12px]">
        <PopularityCard />
        <SentimentCard />
      </div>
      <BottomNav />
    </div>
  );
}
